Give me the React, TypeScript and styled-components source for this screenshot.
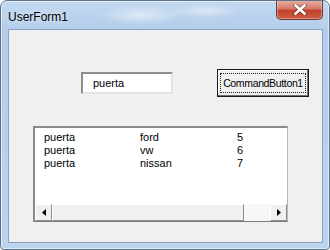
import React from "react";
import styled, { createGlobalStyle } from "styled-components";

const Global = createGlobalStyle`
  html, body { margin: 0; padding: 0; background: #ffffff; }
  body { width: 330px; height: 250px; overflow: hidden; }
`;

const Win = styled.div`
  width: 328px;
  height: 248px;
  border: 1px solid #5f728c;
  border-radius: 7px 7px 4px 4px;
  background:
    radial-gradient(ellipse 60px 14px at 140px 14px, rgba(255,255,255,0.5), rgba(255,255,255,0) 70%),
    radial-gradient(ellipse 50px 10px at 205px 10px, rgba(255,255,255,0.45), rgba(255,255,255,0) 70%),
    linear-gradient(180deg, #c2d8f0 0%, #b3cdea 30px, #bcd4ee 100%);
  box-shadow: inset 0 0 0 1px rgba(255,255,255,0.55);
  display: flex;
  flex-direction: column;
  font-family: "Liberation Sans", Arial, sans-serif;
  overflow: hidden;
`;

const TitleBar = styled.div`
  height: 28px;
  display: flex;
  align-items: flex-start;
  justify-content: space-between;
  padding-left: 7px;
`;

const Title = styled.div`
  font-size: 12px;
  color: #000;
  margin-top: 9px;
  text-shadow: 0 0 6px rgba(255,255,255,0.9);
`;

const Close = styled.div`
  width: 45px;
  height: 19px;
  margin-top: -1px;
  margin-right: 6px;
  border: 1px solid #6a3a36;
  border-top: none;
  border-radius: 0 0 5px 5px;
  background: linear-gradient(180deg, #e8b3a6 0%, #d7796a 45%, #c2422c 55%, #cf5a3f 100%);
  box-shadow: inset 0 0 0 1px rgba(255,255,255,0.35);
  display: flex;
  align-items: center;
  justify-content: center;
`;

const Client = styled.div`
  margin: 0 6px 6px 7px;
  flex: 1;
  background: #f0f0f0;
  border: 1px solid #8aa2bf;
  display: flex;
  flex-direction: column;
`;

const TopRow = styled.div`
  display: flex;
  align-items: center;
  padding-top: 38px;
  height: 30px;
`;

const TextBox = styled.div`
  margin-left: 72px;
  height: 18px;
  background: #ffffff;
  border-top: 2px solid #8e8e8e;
  border-left: 2px solid #8e8e8e;
  border-right: 2px solid #e3e3e3;
  border-bottom: 2px solid #e3e3e3;
  font-size: 11px;
  line-height: 18px;
  padding-left: 10px;
  box-sizing: content-box;
  width: 78px;
`;

const Button = styled.div`
  margin-left: 44px;
  width: 92px;
  height: 28px;
  box-sizing: border-box;
  border: 1px solid #1a1a1a;
  background: #f0f0f0;
  box-shadow: inset -1px -1px 0 #707070, inset 1px 1px 0 #ffffff;
  display: flex;
  padding: 3px 2px;
`;

const Focus = styled.div`
  flex: 1;
  border: 1px dotted #202020;
  display: flex;
  align-items: center;
  justify-content: center;
  font-size: 10.5px;
  letter-spacing: -0.35px;
  white-space: nowrap;
`;

const ListBox = styled.div`
  margin-top: 28px;
  margin-left: 24px;
  width: 255px;
  height: 96px;
  box-sizing: border-box;
  background: #ffffff;
  border-top: 2px solid #8a8a8a;
  border-left: 2px solid #8a8a8a;
  border-right: 1px solid #b8b8b8;
  border-bottom: 1px solid #7a7a7a;
  display: flex;
  flex-direction: column;
`;

const Rows = styled.div`
  flex: 1;
  padding-top: 3px;
`;

const Row = styled.div`
  display: grid;
  grid-template-columns: 96px 97px 1fr;
  padding-left: 9px;
  font-size: 11px;
  line-height: 13px;
  height: 13px;
  color: #000;
`;

const ScrollBar = styled.div`
  height: 17px;
  display: flex;
  background: #f6f6f6;
`;

const Arrow = styled.div`
  width: 17px;
  height: 17px;
  box-sizing: border-box;
  background: #f0f0f0;
  border-top: 1px solid #ffffff;
  border-left: 1px solid #ffffff;
  border-right: 1px solid #8e8e8e;
  border-bottom: 1px solid #8e8e8e;
  display: flex;
  align-items: center;
  justify-content: center;
`;

const Thumb = styled.div`
  width: 192px;
  height: 17px;
  box-sizing: border-box;
  background: #f0f0f0;
  border-top: 1px solid #ffffff;
  border-left: 1px solid #ffffff;
  border-right: 1px solid #8e8e8e;
  border-bottom: 1px solid #8e8e8e;
`;

const Track = styled.div`
  flex: 1;
  background: #f7f7f7;
`;

const data = [
  ["puerta", "ford", "5"],
  ["puerta", "vw", "6"],
  ["puerta", "nissan", "7"],
];

export default function App() {
  return (
    <>
      <Global />
      <Win>
        <TitleBar>
          <Title>UserForm1</Title>
          <Close>
            <svg width="14" height="11" viewBox="0 0 14 11">
              <path d="M2 1 L12 10 M12 1 L2 10" stroke="#3a1a16" strokeWidth="4" strokeLinecap="square" opacity="0.5" />
              <path d="M2.5 1.5 L11.5 9.5 M11.5 1.5 L2.5 9.5" stroke="#ffffff" strokeWidth="2.6" strokeLinecap="square" />
            </svg>
          </Close>
        </TitleBar>
        <Client>
          <TopRow>
            <TextBox>puerta</TextBox>
            <Button>
              <Focus>CommandButton1</Focus>
            </Button>
          </TopRow>
          <ListBox>
            <Rows>
              {data.map((r, i) => (
                <Row key={i}>
                  <span>{r[0]}</span>
                  <span>{r[1]}</span>
                  <span>{r[2]}</span>
                </Row>
              ))}
            </Rows>
            <ScrollBar>
              <Arrow>
                <svg width="4" height="7" viewBox="0 0 4 7"><path d="M4 0 L0 3.5 L4 7 Z" fill="#000" /></svg>
              </Arrow>
              <Thumb />
              <Track />
              <Arrow>
                <svg width="4" height="7" viewBox="0 0 4 7"><path d="M0 0 L4 3.5 L0 7 Z" fill="#000" /></svg>
              </Arrow>
            </ScrollBar>
          </ListBox>
        </Client>
      </Win>
    </>
  );
}
